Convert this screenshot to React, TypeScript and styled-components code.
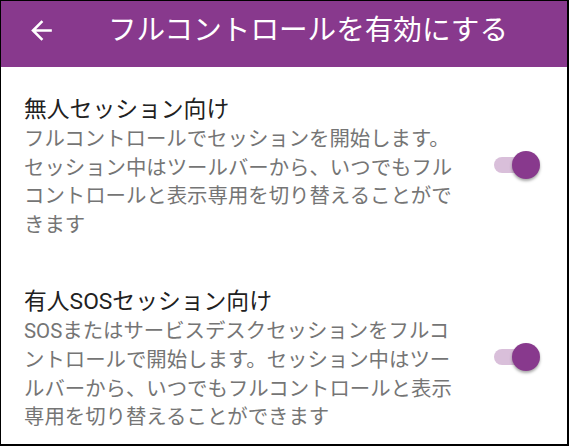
import styled, { createGlobalStyle } from "styled-components";
import { useState } from "react";

const GlobalStyle = createGlobalStyle`
    html, body {
        margin: 0;
        padding: 0;
        background: #ffffff;
    }
    * {
        box-sizing: border-box;
    }
`;

const Screen = styled.div`
    width: 569px;
    height: 446px;
    display: flex;
    flex-direction: column;
    overflow: hidden;
    background-color: #ffffff;
    border-style: solid;
    border-color: #000000;
    border-width: 1px 2px 2px 1px;
    font-family: Roboto, "Noto Sans CJK JP", sans-serif;
`;

const AppBar = styled.header`
    height: 66px;
    flex-shrink: 0;
    display: flex;
    align-items: center;
    gap: 51px;
    padding: 0 0 8px 25px;
    background-color: #88398d;
    color: #ffffff;
`;

const BackButton = styled.button`
    width: 31px;
    height: 31px;
    padding: 0;
    border: none;
    background: transparent;
    color: inherit;
    display: flex;
    align-items: center;
    justify-content: center;
    cursor: pointer;
`;

const AppBarTitle = styled.h1`
    margin: 0;
    font-size: 28.6px;
    font-weight: 400;
    line-height: 36px;
    white-space: nowrap;
`;

const SettingsList = styled.div`
    display: flex;
    flex-direction: column;
    padding-top: 4px;
`;

const SettingRow = styled.div`
    display: flex;
    align-items: center;
    gap: 34px;
    padding: 23px 0 24px 23px;
`;

const SettingText = styled.div`
    width: 436px;
    flex-shrink: 0;
    display: flex;
    flex-direction: column;
`;

const SettingTitle = styled.div`
    font-size: 22.8px;
    line-height: 31px;
    color: #212121;
`;

const SettingDescription = styled.div`
    font-size: 20.4px;
    line-height: 28.6px;
    color: #757575;
    line-break: normal;
`;

const SwitchTrack = styled.button<{ checked: boolean }>`
    position: relative;
    width: 46px;
    height: 28px;
    margin-top: -4px;
    padding: 0;
    border: none;
    background: transparent;
    cursor: pointer;

    &::before {
        content: "";
        position: absolute;
        left: 0;
        top: 6px;
        width: 41px;
        height: 16px;
        border-radius: 8px;
        background-color: ${({ checked }) => (checked ? "rgba(136, 57, 141, 0.32)" : "rgba(0, 0, 0, 0.26)")};
    }
`;

const SwitchThumb = styled.span<{ checked: boolean }>`
    position: absolute;
    top: 0;
    left: ${({ checked }) => (checked ? "18px" : "0")};
    width: 28px;
    height: 28px;
    border-radius: 50%;
    background-color: ${({ checked }) => (checked ? "#88398d" : "#fafafa")};
    box-shadow: 0 2px 3px rgba(0, 0, 0, 0.35);
    transition: left 0.15s;
`;

const ArrowBack = () => (
    <svg width="31" height="31" viewBox="0 0 24 24" fill="currentColor">
        <path d="M20 11H7.83l5.59-5.59L12 4l-8 8 8 8 1.41-1.41L7.83 13H20v-2z" />
    </svg>
);

const App = () => {
    const [settings, setSettings] = useState([
        {
            id: "unattended",
            title: "無人セッション向け",
            description:
                "フルコントロールでセッションを開始します。セッション中はツールバーから、いつでもフルコントロールと表示専用を切り替えることができます",
            enabled: true,
        },
        {
            id: "sos",
            title: "有人SOSセッション向け",
            description:
                "SOSまたはサービスデスクセッションをフルコントロールで開始します。セッション中はツールバーから、いつでもフルコントロールと表示専用を切り替えることができます",
            enabled: true,
        },
    ]);

    return (
        <>
            <GlobalStyle />
            <Screen>
                <AppBar>
                    <BackButton aria-label="戻る">
                        <ArrowBack />
                    </BackButton>
                    <AppBarTitle>フルコントロールを有効にする</AppBarTitle>
                </AppBar>
                <SettingsList>
                    {settings.map((setting) => (
                        <SettingRow key={setting.id}>
                            <SettingText>
                                <SettingTitle>{setting.title}</SettingTitle>
                                <SettingDescription>{setting.description}</SettingDescription>
                            </SettingText>
                            <SwitchTrack
                                checked={setting.enabled}
                                onClick={() =>
                                    setSettings(
                                        settings.map((s) =>
                                            s.id === setting.id ? { ...s, enabled: !s.enabled } : s
                                        )
                                    )
                                }
                            >
                                <SwitchThumb checked={setting.enabled} />
                            </SwitchTrack>
                        </SettingRow>
                    ))}
                </SettingsList>
            </Screen>
        </>
    );
};

export default App;
